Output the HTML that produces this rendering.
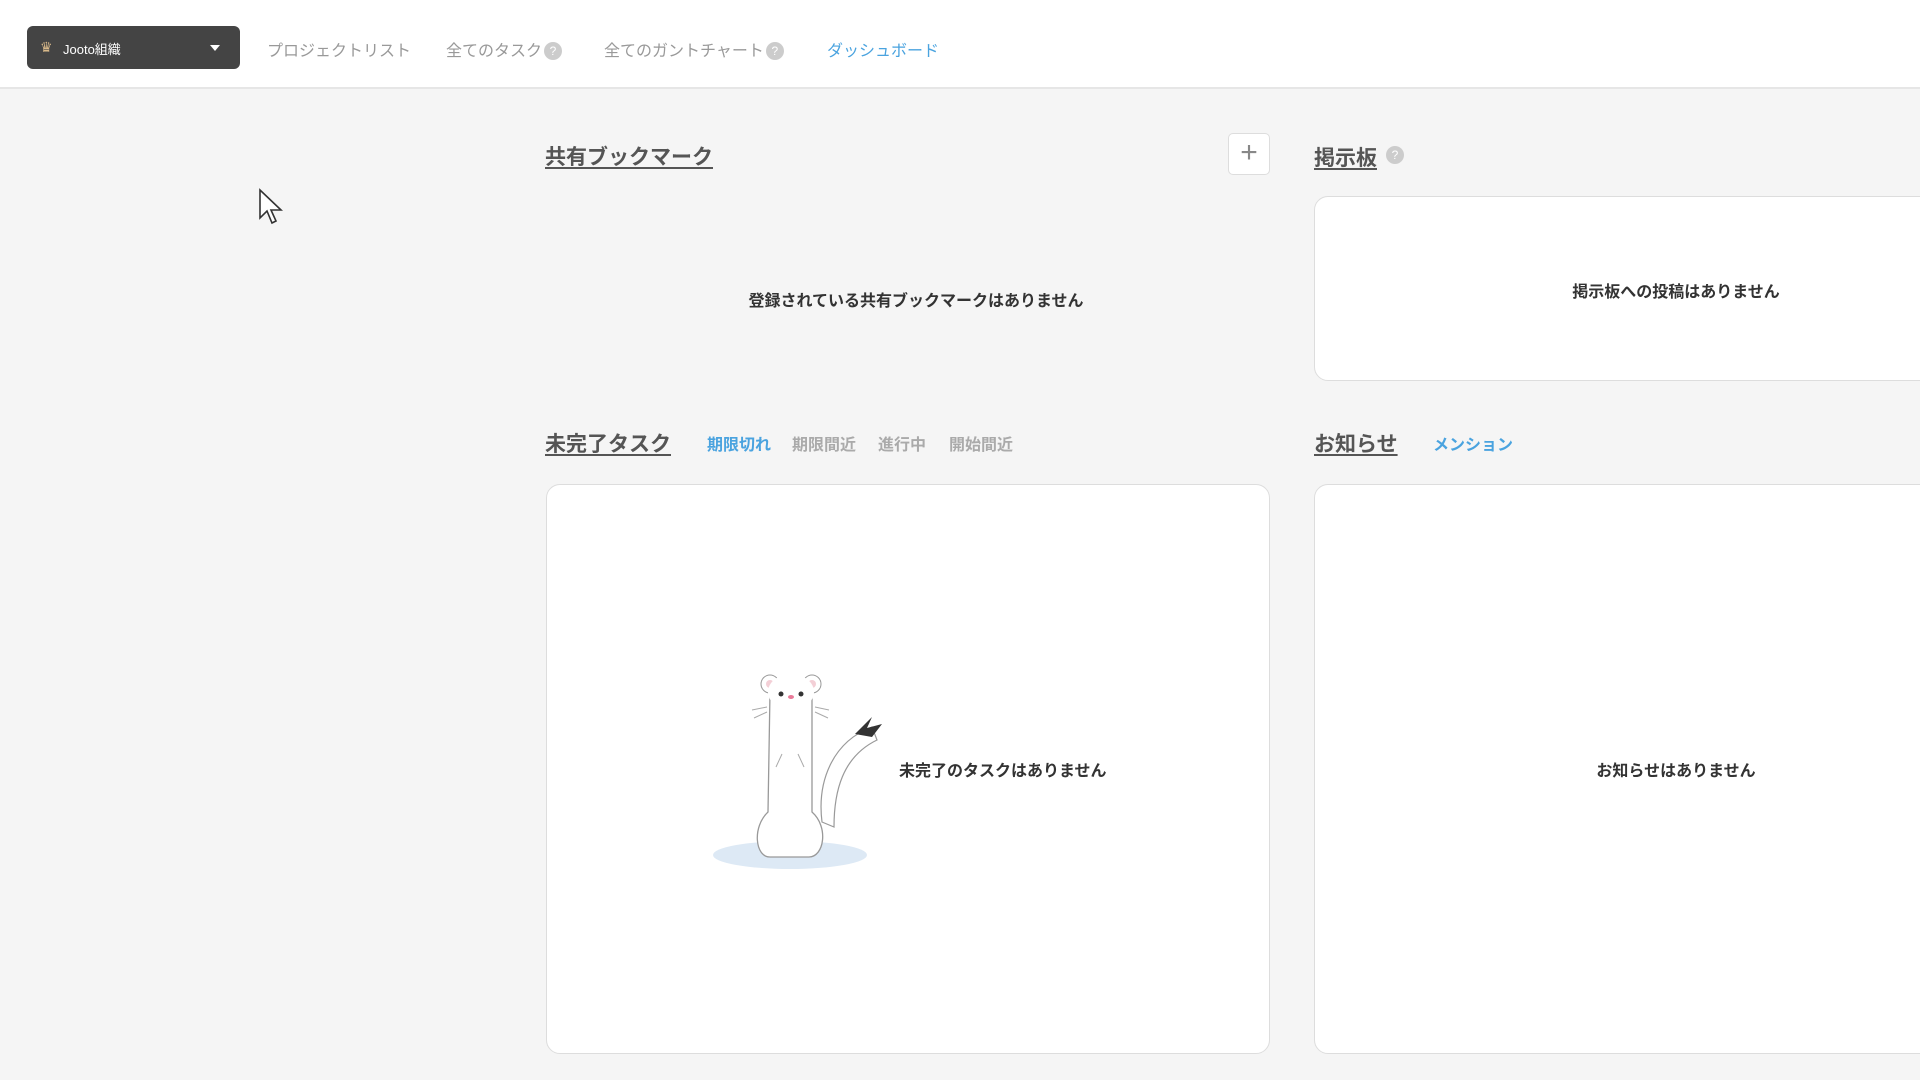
<!DOCTYPE html>
<html><head><meta charset="utf-8"><style>
*{box-sizing:border-box;margin:0;padding:0}
body{width:1920px;height:1080px;overflow:hidden;background:#f5f5f5;font-family:"Liberation Sans","Noto Sans CJK JP",sans-serif;position:relative;color:#333}
.hdr{position:absolute;left:0;top:0;width:1920px;height:89px;background:#fff;border-bottom:2px solid #e6e6e6}
.a{position:absolute;white-space:nowrap}
.dd{left:27px;top:26px;width:213px;height:43px;background:#444;border-radius:6px;color:#fff;font-size:13px}
.nav{font-size:16px;color:#999;top:37px}
.q{display:inline-block;width:18px;height:18px;border-radius:50%;background:#ccc;color:#fff;font-size:12px;text-align:center;line-height:18px;vertical-align:1px;margin-left:2px}
.h{font-size:21px;font-weight:bold;color:#555;text-decoration:underline;text-underline-offset:3px}
.tab{font-size:16px;font-weight:bold;color:#aaa;top:431px}
.card{background:#fff;border:1px solid #ddd;border-radius:14px}
.msg{font-size:16px;font-weight:bold;color:#333;transform:translateX(-50%)}
</style></head><body>
<div class="hdr"></div>
<div class="a dd"><span class="a" style="left:13px;top:13px;color:#d9b98a;font-size:14px">♛</span><span class="a" style="left:36px;top:13px">Jooto組織</span><span class="a" style="left:183px;top:19px;width:0;height:0;border-left:5px solid transparent;border-right:5px solid transparent;border-top:6px solid #fff"></span></div>
<div class="a nav" style="left:267px">プロジェクトリスト</div>
<div class="a nav" style="left:446px">全てのタスク<span class="q">?</span></div>
<div class="a nav" style="left:604px">全てのガントチャート<span class="q">?</span></div>
<div class="a nav" style="left:827px;color:#4aa3df">ダッシュボード</div>

<svg class="a" style="left:258px;top:188px" width="26" height="38" viewBox="0 0 26 38"><path d="M2 2 L2 30 L9 23 L14 35 L18 33 L13 22 L23 22 Z" fill="#fff" stroke="#333" stroke-width="1.6"/></svg>

<div class="a h" style="left:545px;top:141px">共有ブックマーク</div>
<div class="a card" style="left:1228px;top:133px;width:42px;height:42px;border-radius:5px;text-align:center;line-height:38px;font-size:30px;color:#888">+</div>
<div class="a msg" style="left:916px;top:287px">登録されている共有ブックマークはありません</div>

<div class="a h" style="left:1314px;top:142px">掲示板</div><span class="a q" style="left:1384px;top:146px">?</span>
<div class="a card" style="left:1314px;top:196px;width:640px;height:185px"></div>
<div class="a msg" style="left:1676px;top:278px">掲示板への投稿はありません</div>

<div class="a h" style="left:545px;top:428px">未完了タスク</div>
<div class="a tab" style="left:707px;color:#4aa3df">期限切れ</div>
<div class="a tab" style="left:792px">期限間近</div>
<div class="a tab" style="left:878px">進行中</div>
<div class="a tab" style="left:949px">開始間近</div>

<div class="a h" style="left:1314px;top:428px">お知らせ</div>
<div class="a tab" style="left:1433px;color:#4aa3df">メンション</div>

<div class="a card" style="left:546px;top:484px;width:724px;height:570px"></div>
<div class="a card" style="left:1314px;top:484px;width:640px;height:570px"></div>

<svg class="a" style="left:712px;top:662px" width="170" height="210" viewBox="0 0 170 210">
<ellipse cx="78" cy="193" rx="77" ry="14" fill="#dde9f5"/>
<path d="M110 160 C105 120 120 80 160 65 L165 78 C130 95 122 130 122 165 Z" fill="#fff" stroke="#999" stroke-width="1.2"/>
<path d="M143 72 L160 55 L155 66 L170 62 L160 75 Z" fill="#333"/>
<path d="M58 30 C58 10 100 10 100 30 L100 150 C117 165 112 195 97 195 L58 195 C43 195 40 165 56 150 Z" fill="#fff" stroke="#999" stroke-width="1.3"/>
<circle cx="58" cy="22" r="9" fill="#fff" stroke="#999"/><circle cx="100" cy="22" r="9" fill="#fff" stroke="#999"/>
<circle cx="58" cy="22" r="4" fill="#f3cfd6"/><circle cx="100" cy="22" r="4" fill="#f3cfd6"/>
<ellipse cx="79" cy="30" rx="23" ry="18" fill="#fff"/>
<circle cx="69" cy="32" r="2.5" fill="#333"/><circle cx="89" cy="32" r="2.5" fill="#333"/>
<ellipse cx="79" cy="35" rx="3" ry="2" fill="#e97a99"/>
<path d="M55 45 L40 48 M55 50 L42 56 M103 45 L117 48 M103 50 L116 56" stroke="#aaa"/>
<path d="M70 92 L64 105 M86 92 L92 105" stroke="#aaa"/>
</svg>
<div class="a" style="left:899px;top:757px;font-size:16px;font-weight:bold;color:#333">未完了のタスクはありません</div>
<div class="a msg" style="left:1676px;top:757px">お知らせはありません</div>
</body></html>
